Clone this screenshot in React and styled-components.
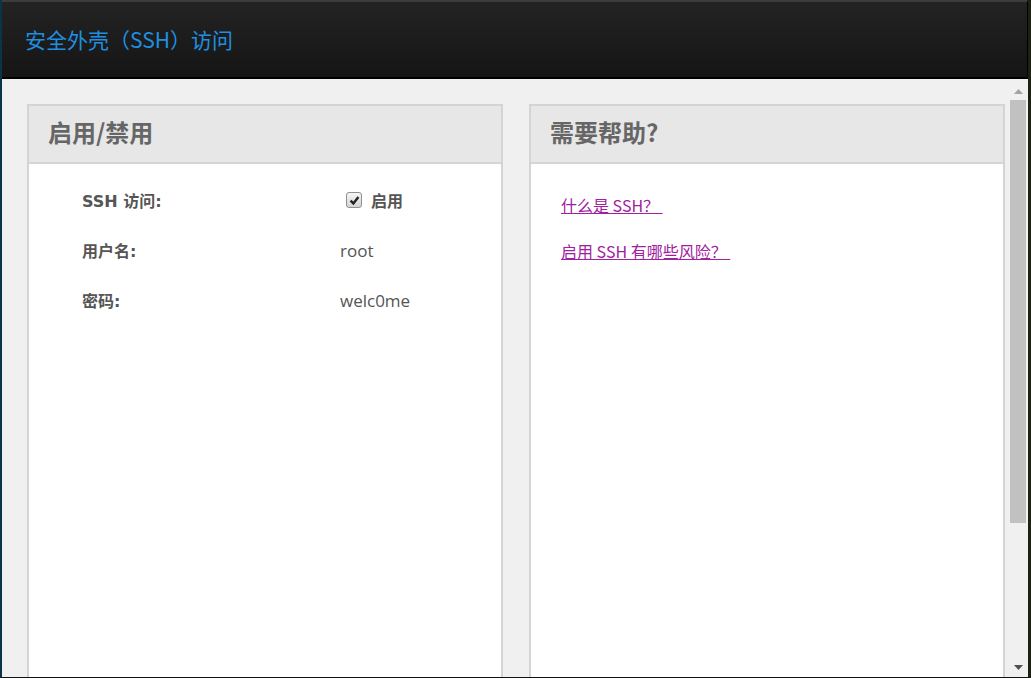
import React from "react";
import styled, { createGlobalStyle } from "styled-components";

const GlobalStyle = createGlobalStyle`
  html, body {
    margin: 0;
    padding: 0;
    height: 100%;
    overflow: hidden;
  }
  body {
    font-family: "Liberation Sans", Arial, "Noto Sans CJK SC", sans-serif;
  }
`;

const Frame = styled.div`
  box-sizing: border-box;
  width: 1031px;
  height: 678px;
  display: flex;
  flex-direction: column;
  border-left: 2px solid #0b3447;
  border-right: 3px solid #1c2210;
  border-bottom: 1px solid #111;
  background: #f0f0f0;
`;

const TopBar = styled.header`
  box-sizing: border-box;
  height: 79px;
  flex: none;
  display: flex;
  align-items: center;
  padding: 0 23px;
  background: linear-gradient(#232323, #151515);
  border-top: 2px solid #3c3c3c;
  border-bottom: 2px solid #000;
  border-right: 1px solid #000;
`;

const Title = styled.h1`
  margin: 0;
  margin-top: -2px;
  font-family: "Noto Sans CJK SC", sans-serif;
  font-weight: 400;
  font-size: 21px;
  color: #1f8fe0;
`;

const Body = styled.div`
  flex: 1;
  min-height: 0;
  display: flex;
`;

const Scroller = styled.main`
  flex: 1;
  overflow: hidden;
  padding: 25px 0 0 25px;
  box-sizing: border-box;
`;

const ScrollBar = styled.div`
  width: 20px;
  flex: none;
  display: flex;
  flex-direction: column;
  background: #f0f0f0;
`;

const ArrowButton = styled.div`
  height: ${(p) => (p.$top ? "21px" : "20px")};
  flex: none;
  display: flex;
  align-items: center;
  justify-content: center;
  padding-left: 1px;
  padding-top: ${(p) => (p.$top ? "3px" : "0")};
  box-sizing: border-box;
`;

const Track = styled.div`
  flex: 1;
  display: flex;
  flex-direction: column;
  padding: 0 2px 0 2px;
`;

const Thumb = styled.div`
  height: 423px;
  background: #c1c1c1;
`;

const Columns = styled.div`
  display: grid;
  grid-template-columns: 476px 476px;
  column-gap: 26px;
`;

const Panel = styled.section`
  border: 2px solid #d4d4d4;
  border-bottom: none;
  background: #fff;
  min-height: 780px;
`;

const PanelHead = styled.div`
  height: 56px;
  display: flex;
  align-items: center;
  padding: 0 19px;
  background: #e7e7e7;
  border-bottom: 2px solid #d4d4d4;
`;

const PanelTitle = styled.h2`
  margin: 0;
  margin-top: -6px;
  font-family: "Noto Sans CJK SC", sans-serif;
  font-weight: 700;
  font-size: 24px;
  color: #666;
`;

const Form = styled.div`
  padding: 26px 0 0 53px;
  display: grid;
  grid-template-columns: 258px auto;
  grid-auto-rows: 50px;
  align-items: start;
`;

const Label = styled.div`
  font-family: "DejaVu Sans", "Noto Sans CJK SC", sans-serif;
  font-weight: 700;
  font-size: 16px;
  color: #555;
  line-height: 24px;
`;

const Value = styled.div`
  font-family: "Open Sans", "Noto Sans CJK SC", sans-serif;
  font-size: 17px;
  color: #555;
  line-height: 24px;
  margin-top: -1px;
`;

const CheckLabel = styled.label`
  display: flex;
  align-items: center;
  gap: 9px;
  height: 24px;
  margin-left: 6px;
  margin-top: -2px;
  font-family: "Noto Sans CJK SC", sans-serif;
  font-weight: 700;
  font-size: 16px;
  color: #555;
  line-height: 24px;
`;

const Box = styled.span`
  width: 16px;
  height: 16px;
  box-sizing: border-box;
  border: 1px solid #8f8f8f;
  border-radius: 3px;
  background: linear-gradient(#f6f6f6, #d4d4d4);
  display: flex;
  align-items: center;
  justify-content: center;
`;

const Links = styled.div`
  padding: 30px 0 0 30px;
  display: flex;
  flex-direction: column;
  gap: 23px;
`;

const HelpLink = styled.a`
  font-family: "Noto Sans CJK SC", sans-serif;
  font-size: 16px;
  color: #a020a0;
  text-decoration: underline;
  line-height: 23px;
  width: fit-content;
  white-space: pre;
`;

function Check() {
  return (
    <Box>
      <svg width="11" height="11" viewBox="0 0 11 11">
        <path d="M1.6 5.6 L4.4 8.4 L9.4 2" fill="none" stroke="#222" strokeWidth="2.4" />
      </svg>
    </Box>
  );
}

function Arrow({ up }) {
  return (
    <svg width="9" height="5" viewBox="0 0 9 5">
      <path d={up ? "M4.5 0 L9 5 L0 5 Z" : "M0 0 L9 0 L4.5 5 Z"} fill={up ? "#a3a3a3" : "#505050"} />
    </svg>
  );
}

export default function App() {
  return (
    <>
      <GlobalStyle />
      <Frame>
        <TopBar>
          <Title>安全外壳（SSH）访问</Title>
        </TopBar>
        <Body>
          <Scroller>
            <Columns>
              <Panel>
                <PanelHead>
                  <PanelTitle>启用/禁用</PanelTitle>
                </PanelHead>
                <Form>
                  <Label>SSH 访问:</Label>
                  <CheckLabel>
                    <Check />
                    启用
                  </CheckLabel>
                  <Label>用户名:</Label>
                  <Value>root</Value>
                  <Label>密码:</Label>
                  <Value>welc0me</Value>
                </Form>
              </Panel>
              <Panel>
                <PanelHead>
                  <PanelTitle>需要帮助?</PanelTitle>
                </PanelHead>
                <Links>
                  <HelpLink href="#">什么是 SSH？ </HelpLink>
                  <HelpLink href="#">启用 SSH 有哪些风险？ </HelpLink>
                </Links>
              </Panel>
            </Columns>
          </Scroller>
          <ScrollBar>
            <ArrowButton $top>
              <Arrow up />
            </ArrowButton>
            <Track>
              <Thumb />
            </Track>
            <ArrowButton>
              <Arrow />
            </ArrowButton>
          </ScrollBar>
        </Body>
      </Frame>
    </>
  );
}
